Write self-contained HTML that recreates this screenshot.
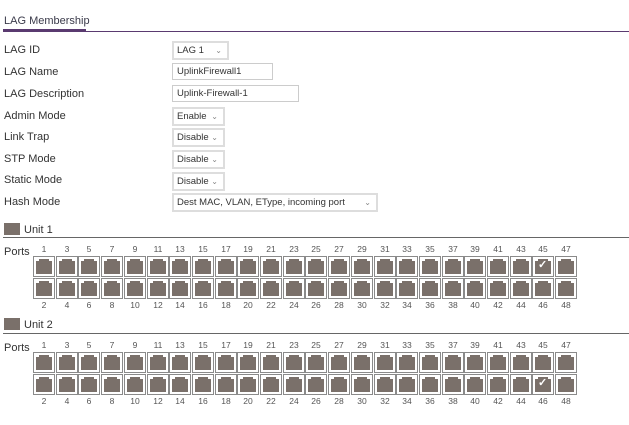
<!DOCTYPE html>
<html><head><meta charset="utf-8"><style>
body{margin:0;width:629px;height:425px;background:#fff;font-family:"Liberation Sans",Arial,sans-serif;color:#333;position:relative;overflow:hidden}
.a{position:absolute}
.lbl{font-size:11px;left:4px}
.ctl{position:absolute;left:172px;height:15px;border:2px solid #ddd;font-size:9.5px;line-height:15px;padding-left:3px;box-sizing:content-box;color:#333}
.ctl .v{position:absolute;right:5px;top:0;font-size:8px;color:#888}
.p{position:absolute;width:20px;height:19px;border:1px solid #8a8a8a;background:#fff}
.p i{position:absolute;left:2px;top:2px;width:16px;height:15px;background:#7a706a;clip-path:polygon(3px 0,13px 0,13px 2px,16px 2px,16px 15px,0 15px,0 2px,3px 2px)}
.p b{position:absolute;left:5px;top:1px;color:#fff;font-size:11px;font-weight:bold}
.n{position:absolute;font-size:8.5px;color:#555;width:22px;text-align:center}
.unit{position:absolute;left:4px;width:16px;height:12px;background:#7a706a}
</style></head><body>
<div class="a" style="left:4px;top:15px;font-size:11px;color:#3a3a4a">LAG Membership</div>
<div class="a" style="left:3px;top:29px;width:83px;height:2px;background:#5a3a70"></div>
<div class="a" style="left:3px;top:31px;width:626px;height:1px;background:#5a3a70"></div>

<div class="a lbl" style="top:44px">LAG ID</div>
<div class="a lbl" style="top:66px">LAG Name</div>
<div class="a lbl" style="top:88px">LAG Description</div>
<div class="a lbl" style="top:110px">Admin Mode</div>
<div class="a lbl" style="top:131px">Link Trap</div>
<div class="a lbl" style="top:153px">STP Mode</div>
<div class="a lbl" style="top:174px">Static Mode</div>
<div class="a lbl" style="top:196px">Hash Mode</div>

<div class="ctl" style="top:41px;width:50px">LAG 1<span class="v">⌄</span></div>
<div class="ctl" style="top:63px;width:95px;border-width:1px;border-color:#ccc;padding-left:4px">UplinkFirewall1</div>
<div class="ctl" style="top:85px;width:121px;border-width:1px;border-color:#ccc;padding-left:4px">Uplink-Firewall-1</div>
<div class="ctl" style="top:107px;width:46px">Enable<span class="v">⌄</span></div>
<div class="ctl" style="top:128px;width:46px">Disable<span class="v">⌄</span></div>
<div class="ctl" style="top:150px;width:46px">Disable<span class="v">⌄</span></div>
<div class="ctl" style="top:172px;width:46px">Disable<span class="v">⌄</span></div>
<div class="ctl" style="top:193px;width:199px">Dest MAC, VLAN, EType, incoming port<span class="v">⌄</span></div>

<div class="unit" style="top:223px"></div>
<div class="a" style="left:24px;top:224px;font-size:11px">Unit 1</div>
<div class="a" style="left:3px;top:237px;width:626px;height:1px;background:#666"></div>
<div class="a" style="left:4px;top:246px;font-size:11px">Ports</div>

<div class="unit" style="top:318px"></div>
<div class="a" style="left:24px;top:319px;font-size:11px">Unit 2</div>
<div class="a" style="left:3px;top:333px;width:626px;height:1px;background:#666"></div>
<div class="a" style="left:4px;top:342px;font-size:11px">Ports</div>

<div id="g"></div>
<script>
var h='';
function unit(y0,chkTop,chkBot){
 for(var i=0;i<24;i++){
  var x=Math.round(33+i*22.7);
  h+='<div class="n" style="left:'+(x)+'px;top:'+(y0-12)+'px">'+(2*i+1)+'</div>';
  h+='<div class="n" style="left:'+(x)+'px;top:'+(y0+44)+'px">'+(2*i+2)+'</div>';
  h+='<div class="p" style="left:'+x+'px;top:'+y0+'px"><i></i>'+(i==chkTop?'<b>✓</b>':'')+'</div>';
  h+='<div class="p" style="left:'+x+'px;top:'+(y0+22)+'px"><i></i>'+(i==chkBot?'<b>✓</b>':'')+'</div>';
 }
}
unit(256,22,-1);
unit(352,-1,22);
document.getElementById('g').innerHTML=h;
</script>
</body></html>
